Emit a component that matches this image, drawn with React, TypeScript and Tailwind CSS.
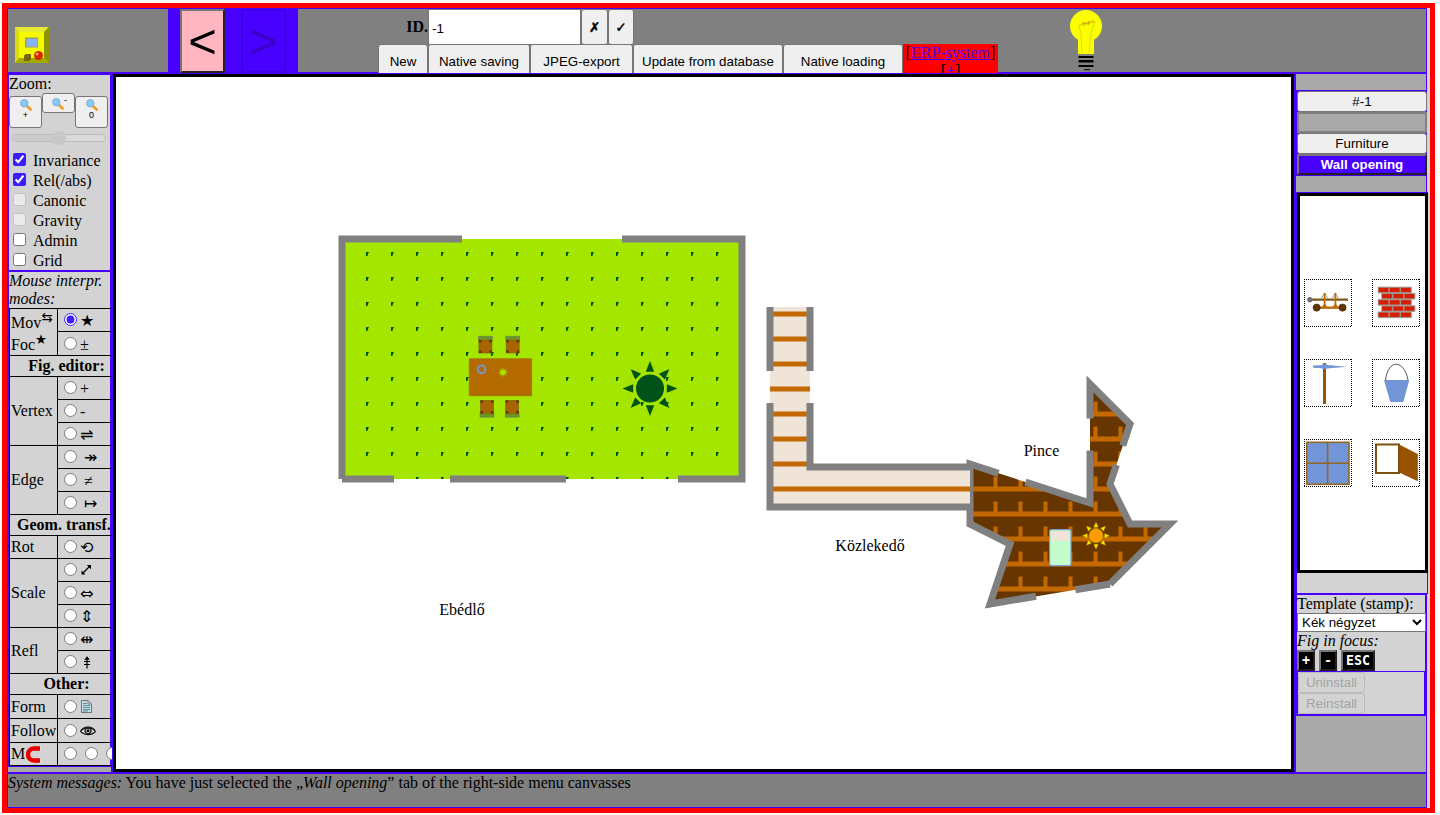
import React from "react";

const SUN_ANGLES = [0, 45, 90, 135, 180, 225, 270, 315];

function Magnifier() {
  return (
    <svg width="12" height="12" viewBox="0 0 12 12" className="shrink-0">
      <path d="M7 7L10.6 10.6" stroke="#f59a1a" strokeWidth="2.6" strokeLinecap="round" />
      <circle cx="4.3" cy="4.3" r="3.7" fill="#83cbfa" stroke="#86aec6" strokeWidth="1" />
    </svg>
  );
}

function Handheld() {
  return (
    <svg width="34" height="36" viewBox="0 0 34 36">
      <rect width="34" height="36" fill="#c8cc00" />
      <path d="M0 0H34L29 5H4Z" fill="#e6ea30" />
      <path d="M34 0V36L29 31V5Z" fill="#8e9400" />
      <path d="M0 36H34L29 31H4Z" fill="#a4aa00" />
      <path d="M0 0L4 5V31L0 36Z" fill="#d8dc10" />
      <rect x="4" y="5" width="25" height="26" fill="#f2fa00" />
      <rect x="10" y="10.5" width="13" height="10" fill="#a09880" />
      <rect x="11.5" y="12" width="10.5" height="7.5" fill="#86b4ff" />
      <path d="M9 28.5L11 27H16V32L14.5 34H9Z" fill="#7a6410" />
      <circle cx="23.5" cy="28.5" r="4.5" fill="#d42800" />
      <circle cx="22" cy="27" r="1.5" fill="#ffa080" />
    </svg>
  );
}

function Bulb() {
  return (
    <svg width="34" height="62" viewBox="0 0 34 62">
      <circle cx="17" cy="17" r="16" fill="#fbff00" />
      <rect x="9" y="28" width="16" height="17" fill="#fbff00" />
      <path d="M10 17L12 24L13 44M25 15L22 24L20 44" stroke="#d6d600" fill="none" strokeWidth=".8" />
      <path d="M10 17L16 13L14 17L20 12L19 16L24 11L26 14L22 13L18 15L13 14" stroke="#c9a800" fill="none" strokeWidth=".8" />
      <rect x="9.5" y="47" width="15" height="2" />
      <rect x="9.5" y="51" width="15" height="2.5" />
      <rect x="9.5" y="56" width="15" height="2" />
      <rect x="15" y="60" width="6" height="1.2" fill="#101030" />
    </svg>
  );
}

function TopButton({ w, children }: { w: string; children: React.ReactNode }) {
  return (
    <button className={`h-[35px] shrink-0 rounded-[3px] border border-[#767676] bg-[#efefef] pt-px text-[13.333px] text-black ${w}`}>
      {children}
    </button>
  );
}

function TopBar() {
  const mark = "h-[36px] rounded-[3px] border border-[#767676] bg-[#efefef] pt-[2px] font-[DejaVu_Sans,sans-serif] text-[13.333px] [-webkit-text-stroke:0.5px_black]";
  return (
    <header className="flex h-[66px] w-[1420px] items-start border border-b-2 border-[#4800ff] bg-[#808080]">
      <div className="h-[63px] w-[160px] pl-[7px] pt-[18px]">
        <Handheld />
      </div>
      <div className="flex h-[63px] w-[130px] gap-[16px] bg-[#4800ff] pl-[12px] font-[Liberation_Sans,sans-serif]">
        <button className="flex h-[64px] w-[45px] items-center justify-center border-2 border-b-[#222] border-l-[#767676] border-r-[#222] border-t-[#767676] bg-[#ffb6c1] text-[49px] leading-none text-black">
          &lt;
        </button>
        <button className="flex h-[64px] w-[45px] items-center justify-center border-2 border-[#4000e4] text-[49px] leading-none text-[#3800c8]">
          &gt;
        </button>
      </div>
      <div className="ml-[80px] flex h-[64px] w-[620px] flex-col overflow-hidden font-[Liberation_Sans,sans-serif]">
        <div className="flex h-[35px] shrink-0 items-start">
          <b className="w-[50px] shrink-0 pt-[9px] text-right font-[Liberation_Serif,serif] text-[16px] leading-[18px]">ID.</b>
          <div className="flex h-[36px] w-[153px] shrink-0 items-center border border-[#767676] bg-white pl-[3px] pt-[4px] text-[13.333px]">-1</div>
          <button className={`${mark} w-[27px]`}>✗</button>
          <button className={`${mark} w-[26px]`}>✓</button>
        </div>
        <div className="flex h-[35px] shrink-0">
          <TopButton w="w-[50px]">New</TopButton>
          <TopButton w="w-[102px]">Native saving</TopButton>
          <TopButton w="w-[103px]">JPEG-export</TopButton>
          <TopButton w="w-[150px]">Update from database</TopButton>
          <TopButton w="w-[120px]">Native loading</TopButton>
          <div className="w-[95px] bg-[#ff0000] text-center font-[Liberation_Serif,serif] text-[16px] leading-[18px]">
            [<span className="text-[#4800ff] underline">ERP-system</span>]
            <br />[<span className="text-[#4800ff] underline">+</span>]
          </div>
        </div>
      </div>
      <div className="ml-[71px]">
        <Bulb />
      </div>
    </header>
  );
}

function Check({ label, checked, disabled }: { label: string; checked?: boolean; disabled?: boolean }) {
  return (
    <label className="flex h-[20px] items-start text-[16px] leading-[20px]">
      <input type="checkbox" defaultChecked={checked} disabled={disabled} className="ml-[4px] mr-[7px] mt-[2px] h-[13px] w-[13px] accent-[#3a1cff]" />
      <span>{label}</span>
    </label>
  );
}

function ZoomPanel() {
  const btn = "flex w-[33px] rounded-[3px] border border-[#767676] bg-[#efefef] text-[9px] leading-[9px] font-[Liberation_Sans,sans-serif]";
  return (
    <section className="h-[195px] w-[101px] bg-[#d3d3d3]">
      <div className="h-[18px] text-[16px] leading-[18px]">Zoom:</div>
      <div className="flex h-[38px] items-start">
        <button className={`${btn} mt-[3px] h-[32px] flex-col items-center pt-[2px]`}>
          <Magnifier />
          <span>+</span>
        </button>
        <button className={`${btn} h-[20px] items-start justify-center pl-[2px] pt-[4px]`}>
          <Magnifier />
          <span className="-mt-[2px]">-</span>
        </button>
        <button className={`${btn} mt-[3px] h-[32px] flex-col items-center pt-[2px]`}>
          <Magnifier />
          <span>0</span>
        </button>
      </div>
      <div className="flex h-[20px] pl-[3px]">
        <svg width="94" height="16" viewBox="0 0 94 16" className="overflow-visible">
          <rect x=".5" y="3.5" width="93" height="7" rx="3.5" fill="#dadada" stroke="#bcbcbc" />
          <path d="M4 4H47V10H4A3 3 0 0 1 4 4Z" fill="#cbcbcb" />
          <circle cx="47" cy="7" r="7.3" fill="#c8c8c8" />
        </svg>
      </div>
      <Check label="Invariance" checked />
      <Check label="Rel(/abs)" checked />
      <Check label="Canonic" disabled />
      <Check label="Gravity" disabled />
      <Check label="Admin" />
      <Check label="Grid" />
    </section>
  );
}

function Mode({ children, checked, space }: { children?: React.ReactNode; checked?: boolean; space?: boolean }) {
  return (
    <label className="flex items-center border-l border-t border-black pl-[6px]">
      <input type="radio" name="mode" defaultChecked={checked} className="mb-px h-[13px] w-[13px] shrink-0 accent-[#3a1cff]" />
      <span className={`pt-[2px] text-[16px] leading-[18px] ${space ? "pl-[7px]" : "pl-[3px]"}`}>{children}</span>
    </label>
  );
}

function Sym({ children }: { children: React.ReactNode }) {
  return <span className="font-[DejaVu_Sans,sans-serif]">{children}</span>;
}

function Group({ span, children }: { span: string; children: React.ReactNode }) {
  return <div className={`flex items-center border-t border-black pl-px text-[16px] leading-[18px] ${span}`}>{children}</div>;
}

function Heading({ children, wide }: { children: React.ReactNode; wide?: boolean }) {
  return (
    <div className={`col-span-2 whitespace-nowrap border-t border-black text-[16px] font-bold leading-[19px] ${wide ? "pl-[7px] text-left" : "pl-[11px] text-center"}`}>
      {children}
    </div>
  );
}

function ModeTable() {
  return (
    <div className="w-[101px] bg-[#d3d3d3]">
      <div className="grid h-[458px] w-[103px] grid-cols-[47px_55px] grid-rows-[23px_24px_21px_23px_23px_23px_23px_23px_23px_21px_23px_23px_23px_23px_23px_23px_21px_24px_24px_23px] overflow-hidden border-b border-l border-black">
        <div className="row-span-2 border-t border-black pl-px pt-[1px] text-[16px] leading-[22px]">
          <div className="flex h-[22px] pt-[2px]">Mov<span className="-mt-[5px] font-[DejaVu_Sans,sans-serif] text-[13.333px]">⇆</span></div>
          <div className="flex h-[22px] pt-[2px]">Foc<span className="-mt-[5px] font-[DejaVu_Sans,sans-serif] text-[13.333px]">★</span></div>
        </div>
        <Mode checked><Sym>★</Sym></Mode>
        <Mode>±</Mode>
        <Heading>Fig. editor:</Heading>
        <Group span="row-span-3">Vertex</Group>
        <Mode>+</Mode>
        <Mode>-</Mode>
        <Mode><Sym>⇌</Sym></Mode>
        <Group span="row-span-3">Edge</Group>
        <Mode space><Sym>↠</Sym></Mode>
        <Mode space>≠</Mode>
        <Mode space><Sym>↦</Sym></Mode>
        <Heading wide>Geom. transf.</Heading>
        <Group span="row-span-1">Rot</Group>
        <Mode><Sym>⟲</Sym></Mode>
        <Group span="row-span-3">Scale</Group>
        <Mode>
          <svg width="12" height="12" viewBox="0 0 12 12" className="-mt-[3px]">
            <path d="M2.5 9.5L10 2" stroke="#000" strokeWidth="1.2" />
            <path d="M6.8 1H11V5.2ZM1.5 6.5V10.5H5.5Z" />
          </svg>
        </Mode>
        <Mode><Sym>⇔</Sym></Mode>
        <Mode><Sym>⇕</Sym></Mode>
        <Group span="row-span-2">Refl</Group>
        <Mode><Sym>⇹</Sym></Mode>
        <Mode>
          <svg width="12" height="13" viewBox="0 0 12 13" className="-mt-[2px]">
            <path d="M7 1V12.5M4 5.5H10M4 8.5H10" stroke="#000" strokeWidth="1.2" />
            <path d="M7 .3L9.8 3.8H4.2Z" />
          </svg>
        </Mode>
        <Heading>Other:</Heading>
        <Group span="row-span-1">Form</Group>
        <Mode>
          <svg width="11" height="13" viewBox="0 0 11 13" className="-mt-[3px] ml-px">
            <path d="M.5 .5H7L10.5 4V12.5H.5Z" fill="#c4dde0" stroke="#666" strokeWidth=".9" />
            <path d="M2 3.5H6M2 5.5H9M2 7.5H9M2 9.5H9M2 11H7" stroke="#4c8795" strokeWidth=".9" />
            <path d="M7 .5V4H10.5" stroke="#966" strokeWidth=".8" fill="none" />
          </svg>
        </Mode>
        <Group span="row-span-1">Follow</Group>
        <Mode>
          <svg width="16" height="10" viewBox="0 0 16 10" className="-mt-px">
            <path d="M.5 5.3C4 .6 11.5 .6 15.5 5.3C12 9.7 4.5 9.7 .5 5.3Z" fill="#d3d3d3" stroke="#111" strokeWidth="1.2" />
            <circle cx="8" cy="4.8" r="3" fill="none" stroke="#111" strokeWidth="1.2" />
            <circle cx="8" cy="4.8" r="1.5" />
            <path d="M1 4C4 0 12 0 15 4" stroke="#111" fill="none" />
          </svg>
        </Mode>
        <Group span="row-span-1">
          M
          <svg width="17" height="19" viewBox="0 0 17 19" className="ml-px shrink-0">
            <path d="M11 3.5H8A6 6 0 0 0 8 15.5H11" stroke="#e80000" strokeWidth="4.5" fill="none" />
            <path d="M11 1.2H15V5.7H11ZM11 13.2H15V17.7H11Z" fill="#e8dede" />
            <path d="M10 1.2H14V5.7H10ZM10 13.2H14V17.7H10Z" fill="#e80000" />
          </svg>
        </Group>
        <div className="flex items-center gap-[8px] border-l border-t border-black pb-px pl-[6px]">
          <input type="radio" name="magnet" className="h-[13px] w-[13px] shrink-0" />
          <input type="radio" name="magnet" className="h-[13px] w-[13px] shrink-0" />
          <input type="radio" name="magnet" className="h-[13px] w-[13px] shrink-0" />
        </div>
      </div>
    </div>
  );
}

function LeftPanel() {
  return (
    <aside className="flex h-[698px] w-[106px] shrink-0 flex-col bg-[#4800ff] pl-[2px] pt-px">
      <ZoomPanel />
      <div className="mt-[2px] h-[36px] w-[101px] bg-[#d3d3d3] text-[16px] italic leading-[18px]">
        Mouse interpr.
        <br />
        modes:
      </div>
      <ModeTable />
      <div className="-ml-px mt-px h-[5px] w-[103px] bg-[#a9a9a9]" />
    </aside>
  );
}

interface SunProps {
  cx: number;
  cy: number;
  r: number;
  base: number;
  tip: number;
  half: number;
  fill: string;
  ray: string;
  stroke?: string;
}

function Sun({ cx, cy, r, base, tip, half, fill, ray, stroke }: SunProps) {
  return (
    <g transform={`translate(${cx} ${cy})`}>
      {SUN_ANGLES.map((a) => (
        <path key={a} d={`M0 ${-tip}L${half} ${-base}H${-half}Z`} transform={`rotate(${a})`} fill={ray} stroke={stroke} strokeWidth=".4" />
      ))}
      <circle r={r} fill={fill} stroke={stroke} strokeWidth=".8" />
    </g>
  );
}

function Chair({ x, y, flip }: { x: number; y: number; flip?: boolean }) {
  return (
    <g transform={flip ? `translate(${x} ${y + 17.4}) scale(1 -1)` : `translate(${x} ${y})`}>
      <rect x=".3" y=".3" width="13.8" height="3.4" fill="#6e9420" stroke="#63885a" strokeWidth=".8" />
      <rect x=".7" y="4" width="13" height="13" fill="#a86400" stroke="#7a6a00" strokeWidth=".7" />
      <path d="M.7 4h2.6v2.4h-2.6zM11.1 4h2.6v2.4h-2.6zM.7 14.6h2.6V17h-2.6zM11.1 14.6h2.6V17h-2.6z" fill="#663300" />
    </g>
  );
}

function FloorPlan() {
  return (
    <main className="h-[698px] w-[1181px] shrink-0 border-[3px] border-black bg-white">
      <svg width="1175" height="692" viewBox="116 77 1175 692" className="block">
        <defs>
          <pattern id="grass" x="354" y="239" width="25" height="25" patternUnits="userSpaceOnUse">
            <rect width="25" height="25" fill="#a5e600" />
            <path d="M12 13H15L14.2 14.6L13.4 17H12Z" fill="#00501b" />
          </pattern>
          <pattern id="planks" x="760" y="301.5" width="25" height="25" patternUnits="userSpaceOnUse">
            <rect width="25" height="25" fill="#f0e4d9" />
            <rect y="10" width="25" height="5" fill="#c46800" />
          </pattern>
          <pattern id="bricks" x="983" y="376.5" width="25" height="25" patternUnits="userSpaceOnUse">
            <rect width="25" height="25" fill="#663500" />
            <rect y="10" width="25" height="5" fill="#c46800" />
            <rect x="10.5" y="0" width="4" height="10" fill="#c46800" />
          </pattern>
        </defs>

        <rect x="342" y="239" width="400" height="240" fill="url(#grass)" />
        <path d="M342 479V239H462M622 239H742V479H678M342 479H394M450 479H566" fill="none" stroke="#808080" strokeWidth="7" />

        <Chair x={478.2} y={336} />
        <Chair x={505.5} y={336} />
        <Chair x={479.8} y={400} flip />
        <Chair x={505} y={400} flip />
        <rect x="469.2" y="358.8" width="62.5" height="37" fill="#b36b00" stroke="#a07400" strokeWidth=".8" />
        <circle cx="481.5" cy="369.3" r="3.8" fill="none" stroke="#7b93c0" strokeWidth="2.2" />
        <Sun cx={503} cy={372.2} r={2.8} base={3} tip={5.2} half={0.6} fill="#a5e600" ray="#a5e600" />
        <circle cx="650" cy="388.5" r="22" fill="none" stroke="#8fd010" strokeWidth=".4" />
        <Sun cx={650} cy={388.5} r={14} base={16.8} tip={27.5} half={4.2} fill="#005218" ray="#005218" />

        <path d="M970 464L1090 503V384L1130 424L1110 484L1130 524H1170L1110 584L990 604L1010 544L970 524Z" fill="url(#bricks)" />
        <path
          d="M1036 596.3L990 604L1010 544L970 524V464L998.5 473.3M1025.5 482L1090 503V450.5M1090 418.5V384L1130 424L1122.8 445.6M1116.4 464.8L1110 484L1130 524H1170L1110 584M1110 584L1075.3 589.8"
          fill="none"
          stroke="#808080"
          strokeWidth="7"
          strokeMiterlimit="10"
        />
        <path d="M770 307H810V467H970V507H770Z" fill="url(#planks)" />
        <path d="M770 307V371M810 307V371M770 403V507H970M810 403V467H970" fill="none" stroke="#808080" strokeWidth="7" />

        <rect x="1049.6" y="529.6" width="21.4" height="36" rx="2" fill="#c2fdca" stroke="#7f9fcf" strokeWidth="1.2" />
        <rect x="1051" y="531" width="18.6" height="10" rx="1.5" fill="#f0e4d9" />
        <Sun cx={1096} cy={535.7} r={7} base={8.6} tip={13.5} half={2.2} fill="#ff9a00" ray="#ffe600" stroke="#b89a00" />

        <g fill="#000" fontSize="16" textAnchor="middle" className="font-[Liberation_Serif,serif]">
          <text x="462" y="615">Ebédlő</text>
          <text x="870" y="551">Közlekedő</text>
          <text x="1041.5" y="456">Pince</text>
        </g>
      </svg>
    </main>
  );
}

function Palette() {
  return (
    <div className="h-[380px] w-[131px] border-[3px] border-black bg-white">
      <svg width="125" height="374" viewBox="1300 196 125 374" className="block">
        <g fill="none" stroke="#000" strokeDasharray="1 1">
          {[279, 359, 439].map((y) =>
            [1304, 1372].map((x) => (
              <path key={`${x}-${y}`} d={`M${x} ${y + 0.5}h48M${x} ${y + 47.5}h48M${x + 0.5} ${y}v48M${x + 47.5} ${y}v48`} />
            ))
          )}
        </g>

        <path d="M1310 299.7H1348" stroke="#7d5a1c" strokeWidth="2.2" />
        <circle cx="1309.8" cy="299.7" r="2.6" fill="#707070" />
        <path d="M1321.5 298L1324.5 293L1327.5 298M1332.5 298L1335.3 293L1338 298" fill="none" stroke="#a0a0a0" />
        <path d="M1317 307.7H1343" stroke="#b86a10" strokeWidth="2.4" />
        <path d="M1323.7 293H1325.5V304L1327.5 308H1321.5L1323.7 304ZM1334.5 293H1336.3V304L1338.3 308H1332.3L1334.5 304Z" fill="#c46800" />
        <circle cx="1316.7" cy="307.6" r="3.6" fill="#663300" stroke="#403010" strokeWidth=".7" />
        <circle cx="1342.5" cy="307.6" r="3.6" fill="#663300" stroke="#403010" strokeWidth=".7" />

        {[0, 1, 2, 3, 4].map((row) => {
          const x = row % 2 ? 1381.3 : 1377.8;
          const y = 286.7 + row * 6.2;
          return (
            <g key={row}>
              <rect x={x} y={y} width="34" height="6.6" fill="#a09490" />
              {[0, 1, 2].map((b) => (
                <rect key={b} x={x + 0.8 + b * 11.2} y={y + 1.1} width="9.8" height="4.3" fill="#d81c00" />
              ))}
            </g>
          );
        })}

        <path d="M1323 363H1326V404H1323Z" fill="#9c5400" />
        <path d="M1313 365.6L1327 365L1347 366.8L1327 368.4L1313 367.8Z" fill="#7295d8" />
        <rect x="1322" y="364" width="5" height="5" rx="1" fill="#7295d8" />

        <path d="M1385.5 380C1388 359 1404 359 1408 380" fill="none" stroke="#555" />
        <path d="M1384 380H1409.3L1403.3 402H1390.3Z" fill="#7295d8" />

        <rect x="1306.7" y="442.3" width="42.3" height="42" fill="#7295d8" stroke="#936623" strokeWidth="1.6" />
        <path d="M1327.6 442V484M1307 463.2H1349" stroke="#936623" strokeWidth="1.6" />

        <rect x="1376" y="444.5" width="23" height="28.5" fill="#fff" stroke="#7d5210" strokeWidth="2" />
        <path d="M1399.7 444.7L1417.8 454V481.3L1399.7 472.7Z" fill="#995200" />
      </svg>
    </div>
  );
}

function RightPanel() {
  const tab = "block h-[21px] w-[130px] text-[13.333px] leading-[17px]";
  const key = "h-[21px] border-2 border-b-[#222] border-l-[#767676] border-r-[#222] border-t-[#767676] bg-black text-center text-[13.333px] font-bold leading-[16px] text-white";
  return (
    <aside className="h-[698px] w-[133px] shrink-0 bg-[#4800ff] pl-[2px]">
      <div className="h-[16px] w-[130px] bg-[#a9a9a9]" />
      <div className="ml-px h-[85px] pt-px font-[Liberation_Sans,sans-serif]">
        <button className={`${tab} rounded-[3px] border border-[#767676] bg-[#efefef]`}>#-1</button>
        <button className={`${tab} border-2 border-[#808080] bg-[#a9a9a9]`} />
        <button className={`${tab} rounded-[3px] border border-[#767676] bg-[#efefef]`}>Furniture</button>
        <button className={`${tab} border-2 border-b-[#222] border-l-[#767676] border-r-[#222] border-t-[#767676] bg-[#4800ff] font-bold text-white`}>Wall opening</button>
      </div>
      <div className="mt-px h-[16px] w-[130px] bg-[#a9a9a9]" />
      <div className="ml-px">
        <div className="w-[131px] bg-[#4800ff] pb-px pt-px">
          <Palette />
          <div className="h-[20px] w-[130px] bg-[#d3d3d3]" />
        </div>
        <div className="mt-px h-[76px] w-[128px] bg-[#d3d3d3] text-[16px] leading-[18px]">
          <div>Template (stamp):</div>
          <select className="block h-[19px] w-[129px] border border-[#767676] bg-white pl-0 font-[Liberation_Sans,sans-serif] text-[13.333px]">
            <option>Kék négyzet</option>
          </select>
          <div className="italic">Fig in focus:</div>
          <div className="flex gap-[4px] font-[DejaVu_Sans_Mono,monospace]">
            <button className={`${key} w-[18px]`}>+</button>
            <button className={`${key} w-[18px]`}>-</button>
            <button className={`${key} w-[34px]`}>ESC</button>
          </div>
        </div>
        <div className="ml-px mt-px h-[42px] w-[126px] bg-[#d3d3d3] font-[Liberation_Sans,sans-serif] text-[13.333px] text-[#a3a3a3]">
          <button disabled className="block h-[21px] w-[67px] rounded-[3px] border border-[#bcbcbc] leading-[17px]">Uninstall</button>
          <button disabled className="block h-[21px] w-[67px] rounded-[3px] border border-[#bcbcbc] leading-[17px]">Reinstall</button>
        </div>
      </div>
      <div className="mt-[2px] h-[56px] w-[130px] bg-[#a9a9a9]" />
    </aside>
  );
}

export default function App() {
  return (
    <div className="h-[815px] w-[1440px] overflow-hidden bg-white pl-[2px] pt-[3px] font-[Liberation_Serif,DejaVu_Sans,serif] text-black">
      <div className="flex h-[810px] w-[1433px] flex-col border-[5px] border-[#ff0000] bg-[#d3d3d3]">
        <TopBar />
        <div className="flex">
          <LeftPanel />
          <FloorPlan />
          <RightPanel />
        </div>
        <footer className="h-[36px] w-[1420px] border border-t-2 border-[#4800ff] bg-[#808080] text-[16px] leading-[18px]">
          <i>System messages:</i> You have just selected the „<i>Wall opening</i>” tab of the right-side menu canvasses
        </footer>
      </div>
    </div>
  );
}
